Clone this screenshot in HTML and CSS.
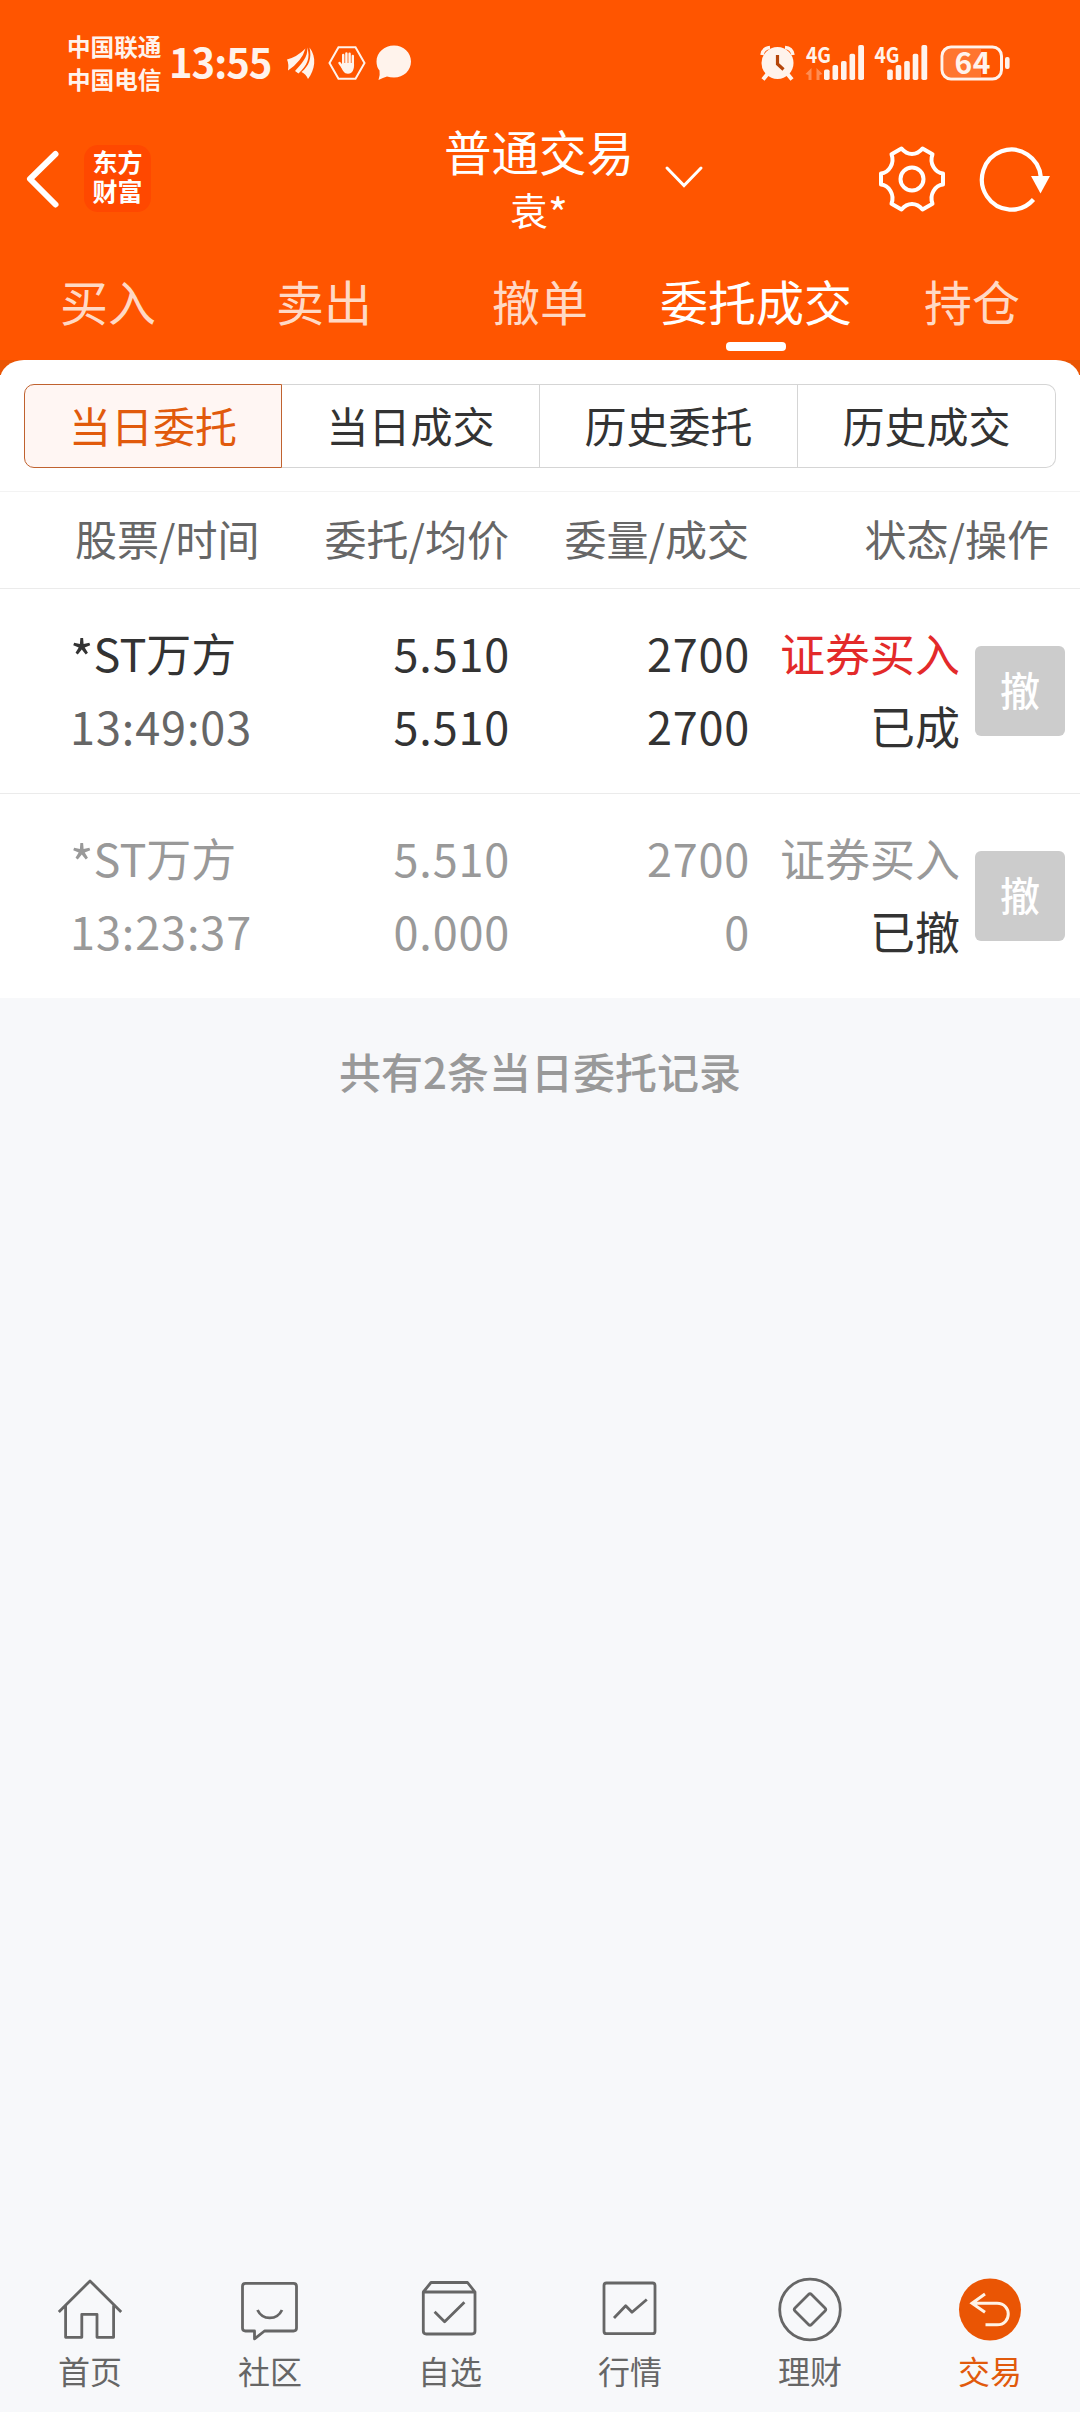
FILE: index.html
```html
<!DOCTYPE html>
<html lang="zh-CN">
<head>
<meta charset="utf-8">
<title>普通交易</title>
<link rel="stylesheet" href="styles.css">
</head>
<body>
<div class="app">
  <header class="header">
    <div class="status">
      <div class="carriers"><span>中国联通</span><span>中国电信</span></div>
      <span class="clock">13:55</span>
      <svg class="ic-wing" width="28" height="34" viewBox="0 0 28 34" fill="#fff3ec">
        <path d="M0 13.500Q10 11 18.500 2.500 Q15 15 1 24.500 Q2 18 0 13.500Z"/>
        <path d="M20 1.500 C22 11 13 19 8 25 L11.500 27.500 C20 20 24 11 20 1.500Z"/>
        <path d="M22.500 1.500 C30 11 28 24 21 33 Q19 28 14.500 26 C22 20 25 12 22.500 1.500Z"/>
      </svg>
      <svg class="ic-hex" width="38" height="34" viewBox="0 0 38 34" fill="none" stroke="#fff3ec" stroke-width="2">
        <path d="M1.500 17 10.500 1.200h17L36.500 17l-9 15.800h-17z"/>
        <path d="M15.200 18V9M18.400 17V7.500M21.600 17V7.800M24.800 18V10M11.500 17l4 5.500" stroke-width="2.400" stroke-linecap="round"/>
        <path d="M14 17h12c.5 6-1.500 10.800-6 10.800-4 0-5.500-3.500-7-7z" fill="#fff3ec" stroke="none"/>
      </svg>
      <svg class="ic-bubble" width="36" height="36" viewBox="0 0 36 36" fill="#fff3ec">
        <path d="M18 .5C27.700.5 35 7.500 35 16.500S27.700 32.500 18 32.500q-4 0-7-1-4 1-8.500 3.500 1.800-5 1-9.500Q.5 22 .5 16.500C.5 7.500 8.300.5 18 .5Z"/>
      </svg>
      <svg class="ic-signal" width="252" height="36" viewBox="0 0 252 36" fill="#fff3ec">
        <circle cx="17.500" cy="18" r="16"/>
        <path d="M2 10Q3 3 10 2.500M33 10Q32 3 25 2.500" fill="none" stroke="#fff3ec" stroke-width="3.500"/>
        <path d="m7.500 29-4.500 5.500M27.500 29l4.500 5.500" stroke="#fff3ec" stroke-width="4"/>
        <path d="M17.500 10v9l6 5.500" fill="none" stroke="#b5450a" stroke-width="3.200"/>
        <text x="46" y="17.500" class="net" textLength="25" lengthAdjust="spacingAndGlyphs">4G</text>
        <path d="M45.500 29l6-6v12h-3v-5zM62.500 29l-6-6v12h3v-5z" opacity=".35"/>
        <g id="bars">
          <rect x="64" y="24.500" width="5.600" height="10.500" rx="1.800"/>
          <rect x="72.500" y="20" width="5.600" height="15" rx="1.800"/>
          <rect x="81" y="16" width="5.600" height="19" rx="1.800"/>
          <rect x="89.500" y="8.800" width="5.600" height="26.200" rx="1.800"/>
          <rect x="98.200" y="0" width="5.800" height="35" rx="1.800"/>
        </g>
        <text x="114.500" y="17.500" class="net" textLength="25" lengthAdjust="spacingAndGlyphs">4G</text>
        <use href="#bars" x="63.200"/>
        <rect x="184" y="4" width="37" height="28" opacity=".2"/>
        <rect x="182" y="2" width="59.500" height="32" rx="9" fill="none" stroke="#fff3ec" stroke-width="3"/>
        <rect x="245" y="12" width="4.600" height="12" rx="2"/>
        <text x="194.500" y="29" class="level" textLength="36">64</text>
      </svg>
    </div>
    <div class="titlebar">
      <svg class="ic-back" width="36" height="60" viewBox="0 0 36 60" fill="none" stroke="#fff" stroke-width="6" stroke-linecap="round" stroke-linejoin="round"><path d="M31.500 5 6 30l25.500 25.500"/></svg>
      <div class="brand"><span>东方</span><span>财富</span></div>
      <div class="heading"><h1>普通交易</h1><p>袁<span class="star">*</span></p></div>
      <svg class="ic-down" width="38" height="22" viewBox="0 0 38 22" fill="none" stroke="#fff" stroke-width="3" stroke-linecap="round"><path d="M2 2l17 17.500L36 2"/></svg>
      <svg class="ic-gear" width="68" height="68" viewBox="-34 -34 68 68" fill="none" stroke="#fff" stroke-width="4" stroke-linejoin="round">
        <path d="M-10.500-30.500Q-6-25 0-25T10.500-30.500L20.500-24.800Q18-18 21.500-12T31-5.500V5.500Q25 6 21.500 12T20.500 24.800L10.500 30.500Q6 25 0 25T-10.500 30.500L-20.500 24.800Q-18 18-21.500 12T-31 5.500V-5.500Q-25-6-21.500-12T-20.500-24.800Z"/>
        <circle r="11.500"/>
      </svg>
      <svg class="ic-refresh" width="74" height="68" viewBox="0 0 74 68"><path d="M55.500 54.500A29.500 30 0 1 1 62.800 32" fill="none" stroke="#fff" stroke-width="4.200"/><path d="M53 31h19l-9.500 17.500z" fill="#fff"/></svg>
    </div>
    <nav class="tabs">
      <a>买入</a><a>卖出</a><a>撤单</a><a class="active">委托成交</a><a>持仓</a>
    </nav>
  </header>
  <main class="backdrop">
    <section class="sheet">
      <div class="segments">
        <a class="on">当日委托</a><a>当日成交</a><a>历史委托</a><a>历史成交</a>
      </div>
      <div class="grid head"><span>股票/时间</span><span>委托/均价</span><span>委量/成交</span><span>状态/操作</span></div>
      <article class="grid row">
        <div class="cell"><span><span class="star">*</span>ST万方</span><span class="time">13:49:03</span></div>
        <div class="cell num"><span>5.510</span><span>5.510</span></div>
        <div class="cell num"><span>2700</span><span>2700</span></div>
        <div class="cell"><span class="buy">证券买入</span><span>已成</span></div>
        <button class="cancel">撤</button>
      </article>
      <article class="grid row muted">
        <div class="cell"><span><span class="star">*</span>ST万方</span><span class="time">13:23:37</span></div>
        <div class="cell num"><span>5.510</span><span>0.000</span></div>
        <div class="cell num"><span>2700</span><span>0</span></div>
        <div class="cell"><span>证券买入</span><span class="state">已撤</span></div>
        <button class="cancel">撤</button>
      </article>
    </section>
  </main>
  <p class="summary">共有2条当日委托记录</p>
  <footer class="bottom">
    <a><svg viewBox="0 0 64 64"><path d="M.8 34 32 3l31.200 31M7.600 27.500v31.800h16.200v-23H39v23h16.600V27.500"/></svg>首页</a>
    <a><svg viewBox="0 0 64 64"><path d="M16.500 53H7.500q-3 0-3-3V8.300q0-3 3-3h48q3 0 3 3V50q0 3-3 3H26.500l-10 7.800zM19.500 32c5 10.500 19.500 10.500 24.500 0"/></svg>社区</a>
    <a><svg viewBox="0 0 64 64"><path d="M5.300 14v39q0 3 3 3H54q3 0 3-3V14zL13 4.500h36.500L57 14M16.600 33.700l10 10 19.800-19.500"/></svg>自选</a>
    <a><svg viewBox="0 0 64 64"><rect x="6" y="5" width="51" height="50.700" rx="2.500"/><path d="M16 40l11.700-12.200 6.300 6.500 14.800-12.800"/></svg>行情</a>
    <a><svg viewBox="0 0 64 64"><circle cx="32" cy="31.500" r="30.300"/><path d="M30.500 16.500q1.500-1.500 3 0L47 30q1.500 1.500 0 3L33.500 46.500q-1.500 1.500-3 0L17 33q-1.500-1.500 0-3z"/></svg>理财</a>
    <a class="current"><svg viewBox="0 0 64 64"><circle cx="32" cy="31.500" r="31" class="disc"/><path d="M27 16 14 25.300l13 9M14 25.300h25c15 0 15 21.500 0 21.500H27.500" class="arrow"/></svg>交易</a>
  </footer>
</div>
</body>
</html>
```
FILE: styles.css
```css
* { box-sizing: border-box; }
body {
  margin: 0;
  font-family: "Noto Sans CJK SC", "Noto Sans", sans-serif;
  color: #333;
  background: #f7f8fa;
}
h1, p { margin: 0; font-weight: 400; }
svg { display: block; flex: none; overflow: visible; }

.app { width: 1080px; height: 2412px; display: flex; flex-direction: column; }
.star { font-size: 1.12em; line-height: 0; vertical-align: -.12em; }

.header { height: 360px; background: #ff5500; color: #fff; }

.status { height: 126px; padding: 0 68px 0 67px; display: flex; align-items: center; color: #fff3ec; }
.carriers { width: 102px; display: flex; flex-direction: column; font-size: 23.6px; font-weight: 700; line-height: 33px; }
.clock { width: 118px; font-size: 40px; font-weight: 700; line-height: 50px; letter-spacing: -1px; padding-bottom: 4px; }
.ic-hex { margin-left: 13px; }
.ic-bubble { margin-left: 10px; }
.ic-signal { margin-left: auto; }
.net { font-size: 21.5px; font-weight: 700; }
.level { font-size: 30px; font-weight: 700; }

.titlebar { height: 118px; display: flex; align-items: center; padding: 0 28px 0 24px; }
.ic-back { margin-top: -13px; }
.brand { width: 67px; height: 67px; margin: -13px 0 0 24px; border-radius: 14px; background: #ff4800; display: flex; flex-direction: column; align-items: center; padding-top: 2px; font-size: 25px; line-height: 29px; font-weight: 700; }
.heading { width: 192px; margin: -12px 0 0 292px; text-align: center; }
.heading h1 { font-size: 47.5px; line-height: 60px; }
.heading p { font-size: 38px; line-height: 56px; }
.ic-down { margin: -16px 0 0 30px; }
.ic-gear { margin: -13px 0 0 auto; }
.ic-refresh { margin: -13px 0 0 32px; }

.tabs { height: 116px; display: grid; grid-template-columns: repeat(5, 1fr); font-size: 48px; line-height: 113px; text-align: center; color: #ffd9c5; }
.tabs .active { color: #fff; display: flex; flex-direction: column; align-items: center; }
.tabs .active::after { content: ""; width: 60px; height: 9px; margin-top: -15px; border-radius: 4px; background: #fff; }

.backdrop { background: linear-gradient(#ea5504 15px, #fff 15px); }
.sheet { background: #fff; border-radius: 24px 24px 0 0 / 20px 20px 0 0; padding-top: 24px; }

.segments { margin: 0 24px 23px; height: 84px; display: grid; grid-template-columns: repeat(4, 1fr); font-size: 42px; line-height: 80px; text-align: center; }
.segments a { border: 1px solid #d5d5d5; border-left-width: 0; }
.segments a:last-child { border-radius: 0 10px 10px 0; }
.segments .on { border: 1px solid #c0622f; border-radius: 10px 0 0 10px; background: #fff6f3; color: #e15a0c; }

.grid { display: grid; }
.head { grid-template-columns: 184px 250px 240px 300px; padding-left: 75px; height: 97px; border-top: 1px solid #f3f3f3; font-size: 42px; line-height: 92px; color: #666; text-align: right; white-space: nowrap; }
.head span:first-child { text-align: left; }
.row { grid-template-columns: 200px 240px 240px 210px 90px; padding: 27px 0 0 70px; height: 205px; border-top: 1px solid #ebebeb; font-size: 45px; line-height: 73px; }
.cell { display: flex; flex-direction: column; text-align: right; white-space: nowrap; }
.cell:first-child { text-align: left; }
.num { letter-spacing: .8px; }
.time { color: #666; letter-spacing: .9px; }
.buy { color: #e32a2a; }
.cancel { width: 90px; height: 90px; margin: 30px 0 0 15px; padding: 0 0 5px; border: 0; border-radius: 6px; background: #ccc; color: #fff; font: 500 40px/80px "Noto Sans CJK SC", sans-serif; }
.muted, .muted .time { color: #999; }
.muted .state { color: #333; }

.summary { padding-top: 42px; text-align: center; font-size: 42px; font-weight: 500; line-height: 62px; color: #999; }

.bottom { margin-top: auto; height: 134px; display: grid; grid-template-columns: repeat(6, 1fr); }
.bottom a { display: flex; flex-direction: column; align-items: center; font-size: 32px; line-height: 48px; gap: 4px; color: #666; }
.bottom svg { width: 64px; height: 64px; fill: none; stroke: #666; stroke-width: 2.8; stroke-linejoin: round; }
.bottom .current { color: #e15a0c; }
.bottom .disc { fill: #ea5504; stroke: none; }
.bottom .arrow { stroke: #fff3e6; stroke-width: 3; stroke-linejoin: miter; }
```
